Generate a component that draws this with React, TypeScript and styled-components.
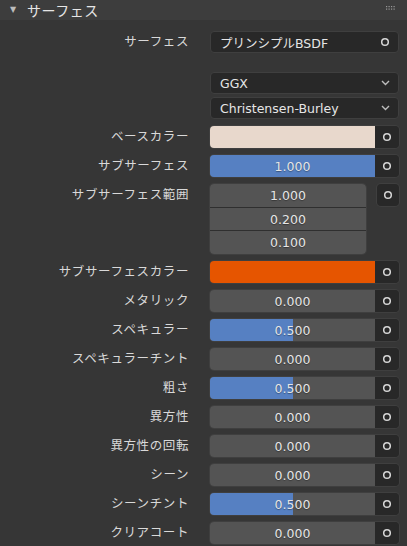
import React from 'react'
import styled, { createGlobalStyle } from 'styled-components'

const COLORS = {
  PANEL: '#363636',
  HEADER: '#3d3d3d',
  FIELD: '#545454',
  DARK: '#282828',
  OUTLINE: '#3f3f3f',
  BLUE: '#5680c2',
  TEXT: '#e6e6e6',
  LABEL: '#d9d9d9',
}

const GlobalStyle = createGlobalStyle`
  html, body {
    margin: 0;
    padding: 0;
    background: ${COLORS.PANEL};
  }
  body {
    font-family: 'DejaVu Sans', 'Noto Sans CJK JP', sans-serif;
    -webkit-font-smoothing: antialiased;
  }
`

type Slider = { kind: 'slider'; label: string; value: number }
type Swatch = { kind: 'color'; label: string; color: string }

const ROWS: (Slider | Swatch)[] = [
  { kind: 'slider', label: 'メタリック', value: 0 },
  { kind: 'slider', label: 'スペキュラー', value: 0.5 },
  { kind: 'slider', label: 'スペキュラーチント', value: 0 },
  { kind: 'slider', label: '粗さ', value: 0.5 },
  { kind: 'slider', label: '異方性', value: 0 },
  { kind: 'slider', label: '異方性の回転', value: 0 },
  { kind: 'slider', label: 'シーン', value: 0 },
  { kind: 'slider', label: 'シーンチント', value: 0.5 },
  { kind: 'slider', label: 'クリアコート', value: 0 },
]

const SocketIcon = () => (
  <svg width="10" height="10" viewBox="0 0 10 10">
    <circle cx="5" cy="5" r="3.3" fill="none" stroke="#d6d6d6" strokeWidth="1.5" />
  </svg>
)

const Chevron = () => (
  <svg width="9" height="6" viewBox="0 0 9 6">
    <path d="M1 1 L4.5 4.5 L8 1" fill="none" stroke="#bdbdbd" strokeWidth="1.4" />
  </svg>
)

const GripIcon = () => (
  <svg width="10" height="5" viewBox="0 0 10 5">
    {[0, 1, 2, 3].map((i) =>
      [0, 1].map((j) => (
        <rect key={`${i}-${j}`} x={i * 2.5} y={j * 2.5} width="1.2" height="1.2" fill="#9a9a9a" />
      )),
    )}
  </svg>
)

const SliderField = ({ value }: { value: number }) => (
  <Joined>
    <NumberBox>
      <Fill style={{ width: `${value * 100}%` }} />
      <NumberText>{value.toFixed(3)}</NumberText>
    </NumberBox>
    <SocketButton>
      <SocketIcon />
    </SocketButton>
  </Joined>
)

const App = () => {
  return (
    <>
      <GlobalStyle />
      <Panel>
        <Header>
          <Triangle>▼</Triangle>
          <HeaderTitle>サーフェス</HeaderTitle>
          <Grip>
            <GripIcon />
          </Grip>
        </Header>

        <Body>
          <Row>
            <Label>サーフェス</Label>
            <Menu>
              <MenuText>プリンシプルBSDF</MenuText>
              <SocketIcon />
            </Menu>
          </Row>

          <EnumGroup>
            <Row>
              <span />
              <Menu>
                <MenuText>GGX</MenuText>
                <Chevron />
              </Menu>
            </Row>
            <Row>
              <span />
              <Menu>
                <MenuText>Christensen-Burley</MenuText>
                <Chevron />
              </Menu>
            </Row>
          </EnumGroup>

          <Row>
            <Label>ベースカラー</Label>
            <Joined>
              <ColorBox color="#e8d8cc" />
              <SocketButton>
                <SocketIcon />
              </SocketButton>
            </Joined>
          </Row>

          <Row>
            <Label>サブサーフェス</Label>
            <SliderField value={1} />
          </Row>

          <Row>
            <Label>サブサーフェス範囲</Label>
            <VectorRow>
              <VectorStack>
                {[1, 0.2, 0.1].map((v) => (
                  <VectorCell key={v}>{v.toFixed(3)}</VectorCell>
                ))}
              </VectorStack>
              <LoneSocket>
                <SocketIcon />
              </LoneSocket>
            </VectorRow>
          </Row>

          <Row>
            <Label>サブサーフェスカラー</Label>
            <Joined>
              <ColorBox color="#e65500" />
              <SocketButton>
                <SocketIcon />
              </SocketButton>
            </Joined>
          </Row>

          {ROWS.map((row) => (
            <Row key={row.label}>
              <Label>{row.label}</Label>
              {row.kind === 'slider' ? <SliderField value={row.value} /> : <ColorBox color={row.color} />}
            </Row>
          ))}
        </Body>
      </Panel>
    </>
  )
}

export default App

const Panel = styled.div`
  width: 407px;
  height: 546px;
  overflow: hidden;
  background: ${COLORS.PANEL};
`

const Header = styled.div`
  display: flex;
  align-items: center;
  height: 20px;
  padding: 0 10px;
  background: ${COLORS.HEADER};
`

const Triangle = styled.span`
  font-size: 8px;
  color: #bdbdbd;
  width: 17px;
  margin-top: -2px;
`

const HeaderTitle = styled.span`
  flex: 1;
  font-size: 14px;
  color: ${COLORS.TEXT};
  letter-spacing: 0.5px;
`

const Grip = styled.span`
  display: flex;
  align-items: center;
  margin-right: 1px;
  margin-top: -3px;
`

const Body = styled.div`
  display: flex;
  flex-direction: column;
  gap: 7px;
  padding: 11px 8px 0 0;
`

const Row = styled.div`
  display: grid;
  grid-template-columns: 189px 189px;
  column-gap: 21px;
  align-items: start;
`

const Label = styled.div`
  height: 22px;
  line-height: 22px;
  text-align: right;
  font-size: 12.5px;
  color: ${COLORS.LABEL};
  white-space: nowrap;
  letter-spacing: 0.6px;
`

const EnumGroup = styled.div`
  display: flex;
  flex-direction: column;
  gap: 3px;
  margin-top: 12px;
`

const Menu = styled.div`
  display: flex;
  align-items: center;
  justify-content: space-between;
  box-sizing: border-box;
  height: 22px;
  padding: 0 8px 0 9px;
  background: ${COLORS.DARK};
  border: 1px solid ${COLORS.OUTLINE};
  border-radius: 4px;
`

const MenuText = styled.span`
  font-size: 12.5px;
  color: ${COLORS.TEXT};
`

const Joined = styled.div`
  display: flex;
  height: 22px;
  border-radius: 4px;
  overflow: hidden;
  box-shadow: 0 0 0 1px ${COLORS.OUTLINE};
`

const NumberBox = styled.div`
  position: relative;
  flex: 1;
  background: ${COLORS.FIELD};
  display: flex;
  align-items: center;
  justify-content: center;
`

const Fill = styled.div`
  position: absolute;
  left: 0;
  top: 0;
  bottom: 0;
  background: ${COLORS.BLUE};
`

const NumberText = styled.span`
  position: relative;
  font-size: 12.5px;
  color: ${COLORS.TEXT};
  text-shadow: 0 1px 1px rgba(0, 0, 0, 0.35);
`

const SocketButton = styled.div`
  width: 24px;
  display: flex;
  align-items: center;
  justify-content: center;
  background: ${COLORS.DARK};
`

const ColorBox = styled.div<{ color: string }>`
  flex: 1;
  background: ${({ color }) => color};
`

const VectorRow = styled.div`
  display: flex;
  align-items: flex-start;
  gap: 11px;
`

const VectorStack = styled.div`
  flex: 1;
  display: flex;
  flex-direction: column;
  gap: 1px;
  background: #2f2f2f;
  border-radius: 4px;
  overflow: hidden;
  box-shadow: 0 0 0 1px ${COLORS.OUTLINE};
`

const VectorCell = styled.div`
  height: 22.7px;
  display: flex;
  align-items: center;
  justify-content: center;
  background: ${COLORS.FIELD};
  font-size: 12.5px;
  color: ${COLORS.TEXT};
  text-shadow: 0 1px 1px rgba(0, 0, 0, 0.35);
`

const LoneSocket = styled.div`
  width: 22px;
  height: 22px;
  display: flex;
  align-items: center;
  justify-content: center;
  background: ${COLORS.DARK};
  border-radius: 4px;
  box-shadow: 0 0 0 1px ${COLORS.OUTLINE};
`
